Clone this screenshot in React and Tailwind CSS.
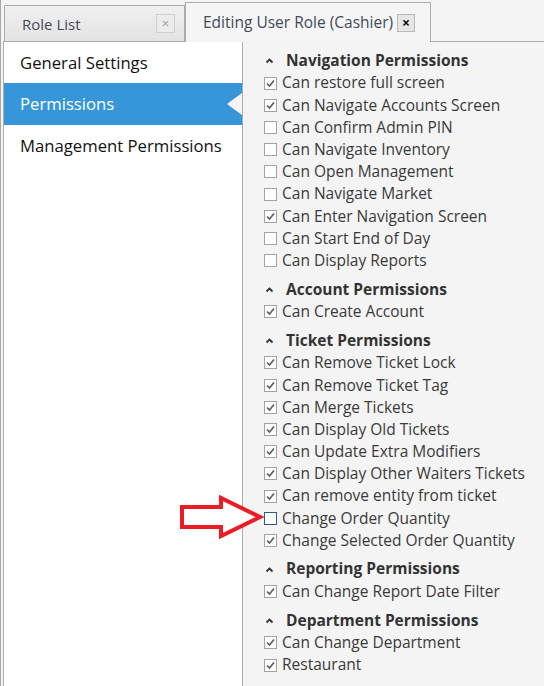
import React from 'react';

const sections = [
    {
        title: 'Navigation Permissions',
        items: [
            ['Can restore full screen', true],
            ['Can Navigate Accounts Screen', true],
            ['Can Confirm Admin PIN', false],
            ['Can Navigate Inventory', false],
            ['Can Open Management', false],
            ['Can Navigate Market', false],
            ['Can Enter Navigation Screen', true],
            ['Can Start End of Day', false],
            ['Can Display Reports', false],
        ],
    },
    {
        title: 'Account Permissions',
        items: [['Can Create Account', true]],
    },
    {
        title: 'Ticket Permissions',
        items: [
            ['Can Remove Ticket Lock', true],
            ['Can Remove Ticket Tag', true],
            ['Can Merge Tickets', true],
            ['Can Display Old Tickets', true],
            ['Can Update Extra Modifiers', true],
            ['Can Display Other Waiters Tickets', true],
            ['Can remove entity from ticket', true],
            ['Change Order Quantity', false, true],
            ['Change Selected Order Quantity', true],
        ],
    },
    {
        title: 'Reporting Permissions',
        items: [['Can Change Report Date Filter', true]],
    },
    {
        title: 'Department Permissions',
        items: [
            ['Can Change Department', true],
            ['Restaurant', true],
        ],
    },
];

const CheckBox = ({ checked, focused }) => (
    <span
        className={
            'flex items-center justify-center w-[13px] h-[13px] border bg-white shrink-0 ' +
            (focused ? 'border-[#2b5797]' : 'border-[#a3a3a3]')
        }
    >
        {checked && (
            <svg width="11" height="11" viewBox="0 0 11 11">
                <polyline points="2,5.5 4.5,8 9,2.5" fill="none" stroke="#5a5a5a" strokeWidth="1.6" />
            </svg>
        )}
    </span>
);

const Chevron = () => (
    <svg width="9" height="7" viewBox="0 0 9 7" className="shrink-0">
        <polyline points="1.5,5.5 4.5,2.5 7.5,5.5" fill="none" stroke="#333" strokeWidth="1.8" />
    </svg>
);

const Section = ({ title, items }) => (
    <div className="mt-[6px]">
        <div className="flex items-center h-[23px] pl-[22px]">
            <Chevron />
            <span className="ml-[12px] font-bold text-[15.5px] text-[#333]">{title}</span>
        </div>
        {items.map(([label, checked, focused], i) => (
            <div key={i} className="flex items-center h-[22.2px] pl-[21px]">
                <CheckBox checked={checked} focused={focused} />
                <span className="ml-[5px] text-[15.5px] text-[#3a3a3a] whitespace-nowrap">{label}</span>
            </div>
        ))}
    </div>
);

const App = () => {
    return (
        <div
            className="relative w-[544px] h-[686px] overflow-hidden bg-[#f4f4f4] border-l border-[#a8a8a8] pl-[2px] flex flex-col"
            style={{ fontFamily: '"Open Sans", "Noto Sans", sans-serif' }}
        >
            {/* tabs */}
            <div className="flex items-end h-[42px] shrink-0 border-b border-[#acacac]">
                <div className="flex items-center w-[181px] h-[37px] -mb-px ml-px border border-[#acacac] bg-gradient-to-b from-[#f0f0f0] to-[#e3e3e3] pl-[17px] pr-[9px]">
                    <span className="text-[15px] text-[#3f4a5a] flex-1 pt-[2px]">Role List</span>
                    <span className="flex items-center justify-center w-[19px] h-[19px] border border-[#d0d0d0] bg-[#ececec] text-[#9a9a9a] text-[13px] leading-none">×</span>
                </div>
                <div className="flex items-center w-[246px] h-[40px] -mb-px border border-b-0 border-[#acacac] bg-[#f5f5f5] pl-[17px]">
                    <span className="text-[15.5px] text-[#3f4a5a]">Editing User Role (Cashier)</span>
                    <span className="ml-[4px] flex items-center justify-center w-[18px] h-[18px] border border-[#b8b8b8] bg-[#e6e6e6] text-[#111] text-[14px] font-bold leading-none">×</span>
                </div>
            </div>

            {/* body */}
            <div className="flex flex-1 min-h-0">
                <div className="w-[240px] shrink-0 bg-white border-l border-r border-[#acacac]">
                    <div className="flex items-center h-[41px] pl-[16px] text-[16.7px] text-[#111]">General Settings</div>
                    <div className="relative flex items-center h-[42px] pl-[16px] text-[16.7px] text-white bg-[#3796da]">
                        Permissions
                        <span className="absolute right-0 top-[10px] w-0 h-0 border-y-[11px] border-y-transparent border-r-[15px] border-r-[#f4f4f4]" />
                    </div>
                    <div className="flex items-center h-[42px] pl-[16px] text-[16.7px] text-[#111]">Management Permissions</div>
                </div>
                <div className="flex-1 pt-[1px]">
                    {sections.map((s, i) => (
                        <Section key={i} title={s.title} items={s.items} />
                    ))}
                </div>
            </div>

            {/* red annotation arrow */}
            <svg className="absolute left-[178px] top-[494px]" width="88" height="46" viewBox="0 0 88 46">
                <polygon
                    points="3,13 42,13 42,4 81,23 42,42 42,33 3,33"
                    fill="white"
                    stroke="#ec1c24"
                    strokeWidth="4"
                    strokeLinejoin="miter"
                />
            </svg>
        </div>
    );
};

export default App;
